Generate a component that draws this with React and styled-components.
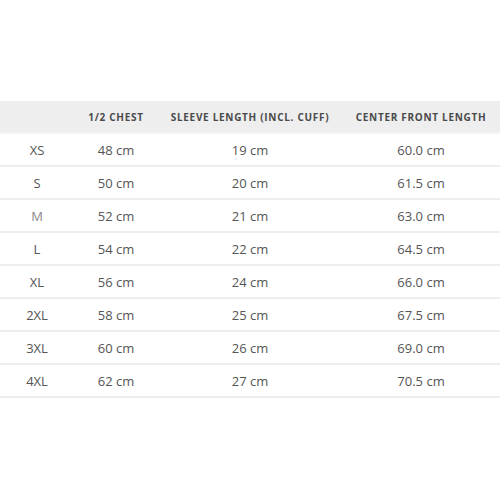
import React from "react";
import styled, { createGlobalStyle } from "styled-components";

const Global = createGlobalStyle`
  html, body { margin: 0; padding: 0; background: #fff; }
  body { font-family: "Open Sans", "Liberation Sans", sans-serif; }
`;

const Wrap = styled.div`
  padding-top: 101px;
  width: 500px;
`;

const Table = styled.table`
  width: 500px;
  border-collapse: collapse;
  table-layout: fixed;
`;

const HeadCell = styled.th`
  width: ${(p) => p.$w}px;
  height: 31px;
  padding: 0;
  background: #eeeeee;
  color: #4a4a4a;
  font-size: 10px;
  font-weight: 700;
  letter-spacing: 0.7px;
  text-transform: uppercase;
  text-align: center;
  white-space: nowrap;
  border-bottom: 2px solid #f4f4f4;
`;

const Cell = styled.td`
  height: 31px;
  padding: 0;
  text-align: center;
  font-size: 13px;
  color: ${(p) => (p.$light ? "#8a8a8a" : "#555555")};
  border-bottom: 2px solid #eeeeee;
`;

const cols = [
  { label: "", w: 74 },
  { label: "1/2 Chest", w: 84 },
  { label: "Sleeve length (incl. cuff)", w: 184 },
  { label: "Center front length", w: 158 },
];

const rows = [
  ["XS", "48 cm", "19 cm", "60.0 cm"],
  ["S", "50 cm", "20 cm", "61.5 cm"],
  ["M", "52 cm", "21 cm", "63.0 cm"],
  ["L", "54 cm", "22 cm", "64.5 cm"],
  ["XL", "56 cm", "24 cm", "66.0 cm"],
  ["2XL", "58 cm", "25 cm", "67.5 cm"],
  ["3XL", "60 cm", "26 cm", "69.0 cm"],
  ["4XL", "62 cm", "27 cm", "70.5 cm"],
];

export default function App() {
  return (
    <Wrap>
      <Global />
      <Table>
        <thead>
          <tr>
            {cols.map((c, i) => (
              <HeadCell key={i} $w={c.w}>
                {c.label}
              </HeadCell>
            ))}
          </tr>
        </thead>
        <tbody>
          {rows.map((r) => (
            <tr key={r[0]}>
              {r.map((v, i) => (
                <Cell key={i} $light={i === 0 && r[0] === "M"}>
                  {v}
                </Cell>
              ))}
            </tr>
          ))}
        </tbody>
      </Table>
    </Wrap>
  );
}
